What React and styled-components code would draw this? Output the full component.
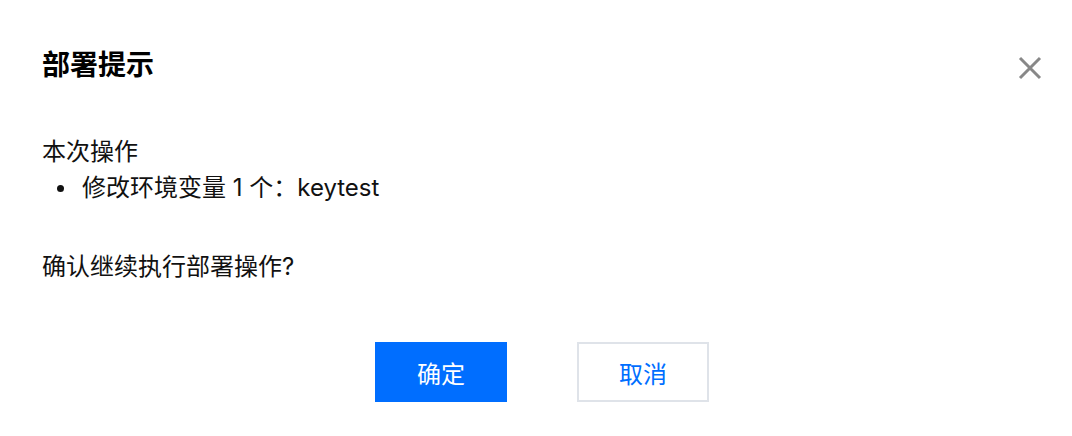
import styled, { createGlobalStyle } from 'styled-components'

const Global = createGlobalStyle`
  body {
    margin: 0;
    background: #fff;
    font-family: "Inter", "Noto Sans CJK SC", sans-serif;
    color: #000;
  }
`

const Dialog = styled.div`
  width: 1072px;
  height: 436px;
  box-sizing: border-box;
  padding: 45px 30px 0 42px;
`

const Header = styled.div`
  display: flex;
  justify-content: space-between;
  align-items: center;
  height: 40px;
`

const Title = styled.h2`
  margin: 0;
  font-size: 28px;
  line-height: 40px;
  font-weight: 700;
  color: #000;
`

const CloseBtn = styled.button`
  border: 0;
  background: none;
  padding: 0;
  width: 24px;
  height: 24px;
  margin-top: 6px;
  cursor: pointer;
  display: flex;
  align-items: center;
  justify-content: center;
`

const Body = styled.div`
  margin-top: 49px;
  font-size: 24px;
  line-height: 36px;
  color: #111;
`

const Text = styled.p`
  margin: 0;
`

const List = styled.ul`
  margin: 0;
  padding: 0;
  list-style: none;
`

const Item = styled.li`
  position: relative;
  padding-left: 40px;
  &::before {
    content: '';
    position: absolute;
    left: 15px;
    top: 15px;
    width: 7px;
    height: 7px;
    border-radius: 50%;
    background: #111;
  }
`

const Confirm = styled.p`
  margin: 43px 0 0;
`

const Footer = styled.div`
  display: flex;
  justify-content: center;
  gap: 70px;
  margin-top: 57px;
`

const Button = styled.button`
  width: 132px;
  height: 60px;
  box-sizing: border-box;
  font-family: inherit;
  font-size: 24px;
  border: 2px solid ${p => (p.$primary ? '#006eff' : '#dfe3e9')};
  background: ${p => (p.$primary ? '#006eff' : '#fff')};
  color: ${p => (p.$primary ? '#fff' : '#006eff')};
  cursor: pointer;
`

export default function App() {
  return (
    <>
      <Global />
      <Dialog>
        <Header>
          <Title>部署提示</Title>
          <CloseBtn aria-label="关闭">
            <svg width="24" height="24" viewBox="0 0 24 24">
              <path d="M2 2 L22 22 M22 2 L2 22" stroke="#888" strokeWidth="3" />
            </svg>
          </CloseBtn>
        </Header>
        <Body>
          <Text>本次操作</Text>
          <List>
            <Item>修改环境变量 1 个：keytest</Item>
          </List>
          <Confirm>确认继续执行部署操作?</Confirm>
        </Body>
        <Footer>
          <Button $primary>确定</Button>
          <Button>取消</Button>
        </Footer>
      </Dialog>
    </>
  )
}
